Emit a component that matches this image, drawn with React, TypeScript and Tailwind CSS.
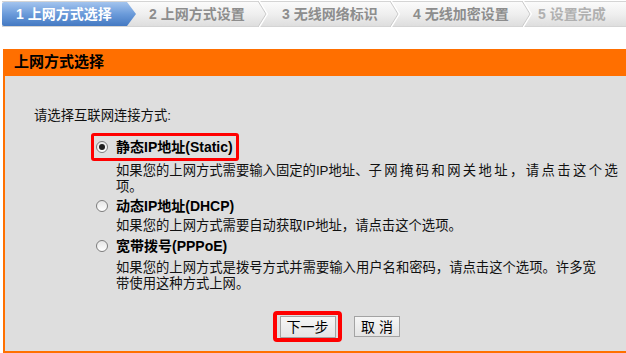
import React from "react";

const FONT = "font-['Liberation_Sans','Noto_Sans_CJK_SC',sans-serif]";

type Option = {
  id: string;
  title: string;
  code: string;
  lines: React.ReactNode[];
};

const OPTIONS: Option[] = [
  {
    id: "static",
    title: "静态IP地址",
    code: "(Static)",
    lines: [
      <>
        如果您的上网方式需要输入固定的IP地址、
        <span className="tracking-[2.4px]">子网掩码和网关地址，请点击这个选</span>
      </>,
      "项。",
    ],
  },
  {
    id: "dhcp",
    title: "动态IP地址",
    code: "(DHCP)",
    lines: ["如果您的上网方式需要自动获取IP地址，请点击这个选项。"],
  },
  {
    id: "pppoe",
    title: "宽带拨号",
    code: "(PPPoE)",
    lines: [
      "如果您的上网方式是拨号方式并需要输入用户名和密码，请点击这个选项。许多宽",
      "带使用这种方式上网。",
    ],
  },
];

const STEPS = [
  { label: "2 上网方式设置", w: "w-[132px]", pl: "pl-[13px]" },
  { label: "3 无线网络标识", w: "w-[132px]", pl: "pl-[14px]" },
  { label: "4 无线加密设置", w: "w-[132px]", pl: "pl-[13px]" },
];

function Chevron() {
  return (
    <svg width="10" height="26" viewBox="0 0 10 26" className="shrink-0" aria-hidden>
      <polyline points="1,0 9,13 1,26" fill="none" stroke="#ffffff" strokeWidth="2" />
      <polyline points="0,0 8,13 0,26" fill="none" stroke="#c9c9c9" strokeWidth="1" />
    </svg>
  );
}

function Radio({ checked }: { checked: boolean }) {
  return (
    <span className="w-[12px] h-[12px] rounded-full border border-[#7c7c7c] bg-gradient-to-b from-[#e6e6e6] to-white flex items-center justify-center shrink-0">
      {checked && <span className="w-[6px] h-[6px] rounded-full bg-[#1e1e1e]" />}
    </span>
  );
}

function Label({ o }: { o: Option }) {
  return (
    <span className="text-[14px] font-bold text-black leading-[20px] whitespace-nowrap">
      {o.title}
      {o.code}
    </span>
  );
}

function Desc({ lines, mt }: { lines: React.ReactNode[]; mt: string }) {
  return (
    <div className={`pl-[25px] ${mt} text-[13.33px] leading-[16px] text-[#111]`}>
      {lines.map((l, i) => (
        <div key={i} className="whitespace-nowrap">
          {l}
        </div>
      ))}
    </div>
  );
}

export default function App() {
  const [opt] = React.useState("static");

  return (
    <div className={`w-[626px] h-[353px] bg-white overflow-hidden ${FONT}`}>
      {/* step bar */}
      <div className="mt-[1px] ml-[2px] h-[26px] flex items-center border-y border-[#d4d4d4] bg-gradient-to-b from-[#fbfbfb] via-[#efefef] to-[#dedede]">
        <div className="w-[134px] h-[24px] flex items-center pl-[14px] text-white text-[14px] font-bold rounded-l-[2px] bg-gradient-to-b from-[#a3c4ee] via-[#6b9bda] to-[#4479c2] [clip-path:polygon(0_0,125px_0,134px_50%,125px_100%,0_100%)]">
          1 上网方式选择
        </div>
        {STEPS.map((s) => (
          <div key={s.label} className={`${s.w} h-full flex items-center justify-between shrink-0`}>
            <span className={`${s.pl} text-[14px] font-bold text-[#8d8d8d] whitespace-nowrap`}>
              {s.label}
            </span>
            <Chevron />
          </div>
        ))}
        <span className="pl-[6px] text-[14px] font-bold text-[#b0b0b0] whitespace-nowrap">
          5 设置完成
        </span>
      </div>

      {/* panel */}
      <div className="mt-[22px] ml-[3px]">
        <div className="h-[27px] bg-[#ff6f00] flex items-center pl-[11px] text-[15px] font-bold text-black">
          上网方式选择
        </div>
        <div className="bg-[#dedede] border-l-2 border-b-2 border-[#ff7000] pt-[32px] pb-[9px]">
          <div className="pl-[29px] text-[13.33px] leading-[16px] text-[#111]">
            请选择互联网连接方式:
          </div>

          <div className="pl-[86px]">
            {OPTIONS.map((o, i) => (
              <div key={o.id}>
                {i === 0 ? (
                  <div className="mt-[9px] inline-flex items-center h-[28px] border-[3px] border-[#ff0000] rounded-[3px] pl-[2px] pr-[3px] gap-[8px]">
                    <Radio checked={opt === o.id} />
                    <Label o={o} />
                  </div>
                ) : (
                  <div className={`${i === 1 ? "mt-[1px]" : "mt-[2px]"} flex items-center h-[20px] pl-[5px] gap-[8px]`}>
                    <Radio checked={opt === o.id} />
                    <Label o={o} />
                  </div>
                )}
                <Desc lines={o.lines} mt={i === 2 ? "mt-[4px]" : "mt-[2px]"} />
              </div>
            ))}
          </div>

          <div className="mt-[19px] pl-[268px] flex items-center gap-[12px]">
            <div className="w-[69px] h-[31px] border-[4px] border-[#ff0000] rounded-[4px] flex items-center justify-center">
              <button className="w-[56px] h-[22px] border border-[#a3a3a3] bg-gradient-to-b from-[#f6f6f6] to-[#e4e4e4] text-[14px] text-black leading-none">
                下一步
              </button>
            </div>
            <button className="w-[46px] h-[21px] border border-[#a3a3a3] bg-gradient-to-b from-[#f6f6f6] to-[#e4e4e4] text-[14px] text-black leading-none">
              取 消
            </button>
          </div>
        </div>
      </div>
    </div>
  );
}
